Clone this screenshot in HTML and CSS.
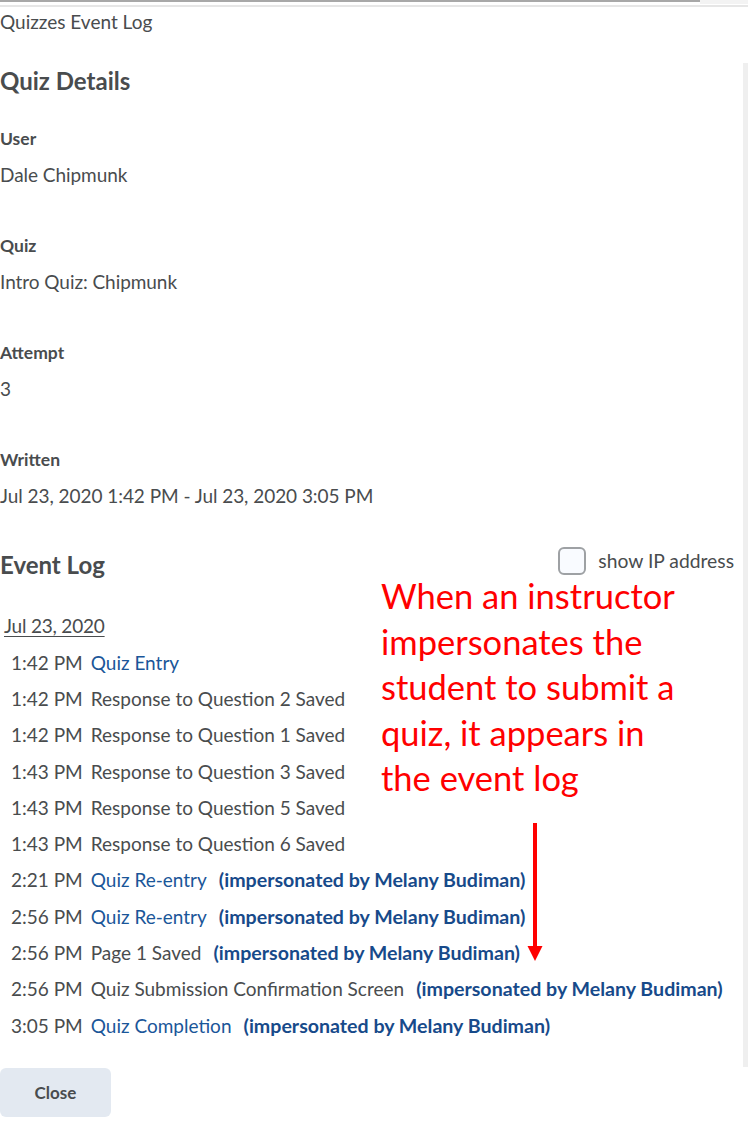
FILE: index.html
```html
<!DOCTYPE html>
<html lang="en">
<head>
<meta charset="utf-8">
<title>Quizzes Event Log</title>
<link rel="stylesheet" href="styles.css">
</head>
<body>
<div class="topbar"><div class="topbar-track"></div><div class="topbar-end"></div></div>
<div class="frame">
  <main class="content">
    <div class="page-title">Quizzes Event Log</div>
    <h2 class="section-title">Quiz Details</h2>
    <div class="field">
      <div class="field-label">User</div>
      <div class="field-value">Dale Chipmunk</div>
    </div>
    <div class="field">
      <div class="field-label">Quiz</div>
      <div class="field-value">Intro Quiz: Chipmunk</div>
    </div>
    <div class="field">
      <div class="field-label">Attempt</div>
      <div class="field-value">3</div>
    </div>
    <div class="field">
      <div class="field-label">Written</div>
      <div class="field-value">Jul 23, 2020 1:42 PM - Jul 23, 2020 3:05 PM</div>
    </div>

    <div class="log-head">
      <h2 class="section-title log-title">Event Log</h2>
      <label class="ip-toggle"><span class="checkbox"></span><span class="ip-label">show IP address</span></label>
    </div>

    <div class="log-date">Jul 23, 2020</div>
    <ul class="events">
      <li class="event"><span class="time">1:42 PM</span><a class="link">Quiz Entry</a></li>
      <li class="event"><span class="time">1:42 PM</span><span>Response to Question 2 Saved</span></li>
      <li class="event"><span class="time">1:42 PM</span><span>Response to Question 1 Saved</span></li>
      <li class="event"><span class="time">1:43 PM</span><span>Response to Question 3 Saved</span></li>
      <li class="event"><span class="time">1:43 PM</span><span>Response to Question 5 Saved</span></li>
      <li class="event"><span class="time">1:43 PM</span><span>Response to Question 6 Saved</span></li>
      <li class="event"><span class="time">2:21 PM</span><a class="link">Quiz Re-entry</a><span class="imp">(impersonated by Melany Budiman)</span></li>
      <li class="event"><span class="time">2:56 PM</span><a class="link">Quiz Re-entry</a><span class="imp">(impersonated by Melany Budiman)</span></li>
      <li class="event"><span class="time">2:56 PM</span><span>Page 1 Saved</span><span class="imp">(impersonated by Melany Budiman)</span></li>
      <li class="event"><span class="time">2:56 PM</span><span>Quiz Submission Confirmation Screen</span><span class="imp">(impersonated by Melany Budiman)</span></li>
      <li class="event"><span class="time">3:05 PM</span><a class="link">Quiz Completion</a><span class="imp">(impersonated by Melany Budiman)</span></li>
    </ul>

    <button class="close-btn" type="button">Close</button>

    <div class="annotation">When an instructor impersonates the student to submit a quiz, it appears in the event log</div>
    <svg class="arrow" width="20" height="140" viewBox="0 0 20 140" aria-hidden="true">
      <rect x="8" y="0" width="4" height="126" fill="#ff0000"/>
      <polygon points="2.5,123 17.5,123 10,138" fill="#ff0000"/>
    </svg>
  </main>
  <div class="scroll-strip"></div>
</div>
</body>
</html>
```

FILE: styles.css
```css
* { box-sizing: border-box; }

html, body {
  margin: 0;
  padding: 0;
  background: #ffffff;
}

body {
  font-family: Lato, "Open Sans", Arial, sans-serif;
  color: #494c4e;
  width: 748px;
  height: 1125px;
  overflow: hidden;
}

.topbar {
  height: 7px;
  display: flex;
  border-bottom: 2px solid #e6e6e6;
}

.topbar-track {
  width: 700px;
  height: 2px;
  background: #a8a8a8;
}

.topbar-end {
  flex: 1;
  height: 4px;
  background: #f3f3f3;
}

.frame {
  display: grid;
  grid-template-columns: 1fr 5px;
}

.content {
  position: relative;
  min-height: 1118px;
}

.scroll-strip {
  margin-top: 56px;
  height: 1004px;
  background: #efefef;
}

.page-title {
  margin-top: 3px;
  font-size: 19px;
  line-height: 24px;
}

.section-title {
  margin: 32px 0 0;
  font-size: 24px;
  line-height: 30px;
  font-weight: 700;
}

.field {
  margin-top: 33px;
}

.field + .field {
  margin-top: 49px;
}

.field-label {
  font-size: 17.5px;
  line-height: 20px;
  font-weight: 700;
}

.field-value {
  margin-top: 14px;
  font-size: 19px;
  line-height: 24px;
  letter-spacing: -0.05px;
}

.log-head {
  margin-top: 39px;
  display: flex;
  align-items: center;
  justify-content: space-between;
  padding-right: 9px;
}

.log-title {
  margin: 0;
}

.ip-toggle {
  display: flex;
  align-items: center;
  gap: 12px;
  margin-bottom: 7px;
}

.checkbox {
  width: 28px;
  height: 28px;
  border: 2px solid #9ea1a4;
  border-radius: 6px;
  background: #f9fbff;
}

.ip-label {
  font-size: 19.3px;
  line-height: 22px;
}

.log-date {
  margin-top: 32px;
  padding-left: 4px;
  font-size: 19px;
  line-height: 24px;
  letter-spacing: -0.2px;
  text-decoration: underline;
  text-underline-offset: 3px;
}

.events {
  list-style: none;
  margin: 6px 0 0;
  padding: 0 0 0 11px;
}

.event {
  height: 36.3px;
  display: flex;
  align-items: center;
  font-size: 19px;
  white-space: nowrap;
}

.time {
  margin-right: 8px;
}

.link {
  color: #1a5699;
}

.imp {
  margin-left: 12px;
  color: #174a8a;
  font-weight: 700;
  font-size: 19.6px;
}

.close-btn {
  display: block;
  margin-top: 25px;
  width: 111px;
  height: 49px;
  border: none;
  border-radius: 6px;
  background: #e3e9f1;
  color: #494c4e;
  font-family: Lato, "Open Sans", Arial, sans-serif;
  font-size: 17px;
  font-weight: 700;
  padding: 0;
}

.annotation {
  position: absolute;
  left: 381px;
  top: 566px;
  width: 310px;
  color: #ff0000;
  font-size: 34.5px;
  line-height: 45.5px;
}

.arrow {
  position: absolute;
  left: 525px;
  top: 816px;
}
```
